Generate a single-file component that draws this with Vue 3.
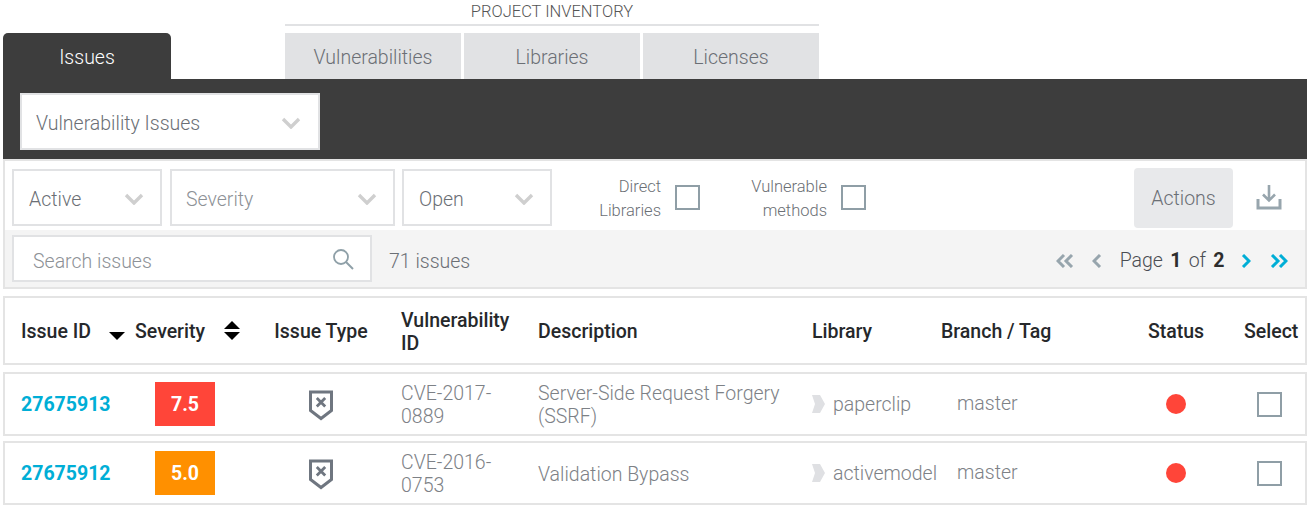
<script setup>
const filters = [
  { label: 'Active', cls: 'w-active', dim: false },
  { label: 'Severity', cls: 'w-severity', dim: true },
  { label: 'Open', cls: 'w-open', dim: false },
]

const rows = [
  { id: '27675913', score: '7.5', level: 'high', cve: 'CVE-2017-0889', desc: 'Server-Side Request Forgery (SSRF)', lib: 'paperclip' },
  { id: '27675912', score: '5.0', level: 'medium', cve: 'CVE-2016-0753', desc: 'Validation Bypass', lib: 'activemodel' },
]
</script>

<template>
  <div class="page">
    <div class="tabs">
      <div class="tab-issues">Issues</div>
      <div class="inventory">
        <div class="inventory-title">PROJECT INVENTORY</div>
        <div class="inventory-tabs">
          <div class="tab">Vulnerabilities</div>
          <div class="tab">Libraries</div>
          <div class="tab">Licenses</div>
        </div>
      </div>
    </div>

    <div class="dark-bar">
      <div class="select select-main">
        <span>Vulnerability Issues</span>
        <svg class="chev" width="20" height="12" viewBox="0 0 20 12"><path d="M2 2l8 8 8-8" /></svg>
      </div>
    </div>

    <div class="panel">
      <div class="panel-top">
        <div v-for="f in filters" :key="f.label" class="select" :class="[f.cls, { dim: f.dim }]">
          <span>{{ f.label }}</span>
          <svg class="chev" width="20" height="12" viewBox="0 0 20 12"><path d="M2 2l8 8 8-8" /></svg>
        </div>
        <div class="check-group first">
          <span>Direct<br />Libraries</span>
          <i class="check"></i>
        </div>
        <div class="check-group second">
          <span>Vulnerable<br />methods</span>
          <i class="check"></i>
        </div>
        <button class="actions">Actions</button>
        <svg class="download" width="26" height="26" viewBox="0 0 26 26">
          <path d="M13 1v15M7 10.5l6 6 6-6" fill="none" stroke="#97a5ad" stroke-width="2.6" />
          <path d="M2 15v9h22v-9" fill="none" stroke="#97a5ad" stroke-width="3" />
        </svg>
      </div>
      <div class="panel-bottom">
        <div class="search">
          <span>Search issues</span>
          <svg width="22" height="22" viewBox="0 0 22 22">
            <circle cx="9" cy="9" r="7" fill="none" stroke="#8fa0a8" stroke-width="1.8" />
            <path d="M14 14l7 7" stroke="#8fa0a8" stroke-width="2" />
          </svg>
        </div>
        <span class="count">71 issues</span>
        <div class="pager">
          <svg width="18" height="14" viewBox="0 0 18 14"><path class="off" d="M8 1L2 7l6 6M16 1l-6 6 6 6" /></svg>
          <svg class="single" width="10" height="14" viewBox="0 0 10 14"><path class="off" d="M8 1L2 7l6 6" /></svg>
          <span class="page-text">Page <b>1</b> of <b>2</b></span>
          <svg class="single next" width="10" height="14" viewBox="0 0 10 14"><path class="on" d="M2 1l6 6-6 6" /></svg>
          <svg width="18" height="14" viewBox="0 0 18 14"><path class="on" d="M2 1l6 6-6 6M10 1l6 6-6 6" /></svg>
        </div>
      </div>
    </div>

    <div class="grid head">
      <div class="cell sort-cell">Issue ID
        <svg class="sort-one" width="16" height="8" viewBox="0 0 16 8"><path d="M0 0h16L8 8z" /></svg>
      </div>
      <div class="cell sort-cell">Severity
        <svg class="sort-two" width="16" height="19" viewBox="0 0 16 19"><path d="M8 0l8 8H0zM0 11h16l-8 8z" /></svg>
      </div>
      <div class="cell center">Issue Type</div>
      <div class="cell vuln">Vulnerability ID</div>
      <div class="cell">Description</div>
      <div class="cell">Library</div>
      <div class="cell">Branch / Tag</div>
      <div class="cell center">Status</div>
      <div class="cell select-head">Select</div>
    </div>

    <div v-for="r in rows" :key="r.id" class="grid row">
      <div class="cell link">{{ r.id }}</div>
      <div class="cell"><span class="score" :class="r.level">{{ r.score }}</span></div>
      <div class="cell center">
        <svg class="shield" width="24" height="31" viewBox="0 0 24 31">
          <path d="M1.5 2h21v18.5L12 28.5 1.5 20.5z" fill="none" stroke="#6f7680" stroke-width="3" />
          <path d="M7.8 8l8.4 8.4M16.2 8l-8.4 8.4" stroke="#6f7680" stroke-width="2.8" />
        </svg>
      </div>
      <div class="cell vuln text">{{ r.cve }}</div>
      <div class="cell desc text">{{ r.desc }}</div>
      <div class="cell lib">
        <svg width="13" height="18" viewBox="0 0 13 18"><path d="M0 0h8l5 9-5 9H0l3-9z" fill="#dfe0e3" /></svg>
        <span>{{ r.lib }}</span>
      </div>
      <div class="cell branch">master</div>
      <div class="cell center"><i class="dot"></i></div>
      <div class="cell"><i class="check row-check"></i></div>
    </div>
  </div>
</template>

<style scoped>
.page {
  width: 1311px;
  height: 509px;
  overflow: hidden;
  font-family: Roboto, "Liberation Sans", sans-serif;
  font-weight: 300;
  font-size: 19.5px;
  color: #6b6f75;
  box-sizing: border-box;
  padding: 0 4px 0 3px;
}
.tabs {
  display: flex;
  align-items: flex-end;
  height: 79px;
}
.tab-issues {
  width: 168px;
  height: 46px;
  background: #3d3d3d;
  color: #fff;
  border-radius: 5px 5px 0 0;
  display: flex;
  align-items: center;
  justify-content: center;
  padding-top: 2px;
  box-sizing: border-box;
}
.inventory {
  margin-left: 114px;
  width: 534px;
}
.inventory-title {
  height: 24px;
  line-height: 24px;
  border-bottom: 2px solid #e1e2e4;
  margin-bottom: 7px;
  font-size: 16.5px;
  text-align: center;
  color: #555;
}
.inventory-tabs {
  display: flex;
  gap: 3px;
}
.tab {
  flex: 1;
  height: 46px;
  background: #e1e2e4;
  display: flex;
  align-items: center;
  justify-content: center;
  padding-top: 2px;
  box-sizing: border-box;
}
.dark-bar {
  height: 80px;
  background: #3d3d3d;
  padding: 14px 0 0 17px;
  box-sizing: border-box;
}
.select {
  height: 57px;
  box-sizing: border-box;
  background: #fff;
  border: 2px solid #e1e2e4;
  display: flex;
  align-items: center;
  justify-content: space-between;
  padding: 2px 16px 0 15px;
}
.select span {
  padding-top: 2px;
}
.select.dim {
  padding-left: 14px;
}
.select.dim span {
  color: #8d9196;
}
.select-main {
  width: 300px;
  padding-left: 14px;
  padding-right: 17px;
}
.chev path {
  fill: none;
  stroke: #cfcfcf;
  stroke-width: 3.4;
}
.panel {
  border: 2px solid #e4e4e4;
  height: 130px;
  box-sizing: border-box;
}
.panel-top {
  display: flex;
  align-items: flex-start;
  height: 69px;
  padding: 8px 0 0 7px;
  box-sizing: border-box;
}
.w-active {
  width: 150px;
  margin-right: 8px;
}
.w-severity {
  width: 225px;
  margin-right: 7px;
}
.w-open {
  width: 150px;
}
.check-group {
  display: flex;
  align-items: center;
  gap: 14px;
  height: 57px;
  font-size: 16.5px;
  line-height: 24px;
  text-align: right;
}
.check-group span {
  padding-top: 2px;
}
.check-group.first {
  width: 148px;
  justify-content: flex-end;
}
.check-group.second {
  width: 166px;
  justify-content: flex-end;
}
.check {
  display: block;
  width: 25px;
  height: 25px;
  box-sizing: border-box;
  border: 2px solid #8f9ea6;
  background: #fff;
}
.actions {
  margin-left: auto;
  width: 99px;
  height: 60px;
  margin-top: -1px;
  background: #e8e9eb;
  border: none;
  border-radius: 4px;
  font: inherit;
  color: #6b6f75;
}
.download {
  margin: 15px 23px 0 23px;
}
.panel-bottom {
  height: 57px;
  background: #f4f4f4;
  display: flex;
  align-items: center;
  padding-left: 7px;
  box-sizing: border-box;
}
.search {
  width: 360px;
  height: 47px;
  box-sizing: border-box;
  background: #fff;
  border: 2px solid #e1e2e4;
  display: flex;
  align-items: center;
  justify-content: space-between;
  padding: 0 16px 0 19px;
  color: #8d9196;
}
.search span {
  padding-top: 5px;
}
.search svg {
  margin-top: 1px;
}
.count {
  margin: 5px 0 0 17px;
}
.pager {
  margin: 4px 17px 0 auto;
  display: flex;
  align-items: center;
}
.pager path {
  fill: none;
  stroke-width: 3;
}
.pager .off {
  stroke: #97a5ad;
}
.pager .on {
  stroke: #00aed6;
}
.single {
  margin-left: 18px;
}
.single.next {
  margin-right: 19px;
  margin-left: 14px;
}
.page-text {
  margin-left: 18px;
  color: #4a4d52;
}
.page-text b {
  font-weight: 700;
  color: #2d2d2d;
  margin: 0 2.5px;
}
.grid {
  display: grid;
  grid-template-columns: 114px 126px 120px 157px 274px 129px 189px 92px 75px;
  align-items: center;
  border: 2px solid #e4e4e4;
  box-sizing: border-box;
  padding-left: 16px;
}
.head {
  height: 69px;
  margin-top: 7px;
  padding-top: 2px;
  font-weight: 500;
  color: #26282b;
  line-height: 23px;
}
.row {
  height: 64px;
  margin-top: 5px;
  line-height: 23px;
  color: #7d8186;
}
.head + .row {
  margin-top: 7px;
}
.cell {
  min-width: 0;
}
.text {
  padding-top: 2px;
}
.center {
  display: flex;
  justify-content: center;
  white-space: nowrap;
}
.vuln {
  padding-left: 20px;
  padding-right: 20px;
}
.desc {
  padding-right: 25px;
}
.sort-cell {
  position: relative;
}
.sort-one {
  position: absolute;
  left: 88px;
  top: 12px;
}
.sort-two {
  position: absolute;
  left: 89px;
  top: 1px;
}
.select-head {
  white-space: nowrap;
  padding-left: 22px;
}
.link {
  color: #00aed6;
  font-weight: 700;
}
.score {
  display: flex;
  align-items: center;
  justify-content: center;
  width: 60px;
  height: 44px;
  margin-left: 20px;
  color: #fff;
  font-weight: 700;
}
.score.high {
  background: #ff4539;
}
.score.medium {
  background: #ff9000;
}
.shield {
  margin-top: 2px;
}
.lib {
  display: flex;
  align-items: center;
  gap: 8px;
}
.branch {
  padding: 0 0 2px 16px;
}
.dot {
  display: block;
  width: 20px;
  height: 20px;
  border-radius: 50%;
  background: #ff4539;
}
.row-check {
  margin-left: 35px;
}
</style>
